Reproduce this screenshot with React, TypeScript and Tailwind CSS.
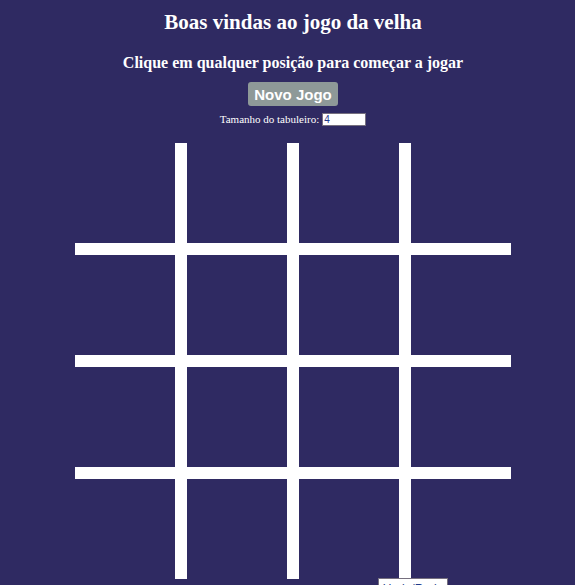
import React, { useState } from "react"

const serif = "font-['Liberation_Serif','Times_New_Roman',serif]"

function Board({ size }: { size: number }) {
  const cells = Array.from({ length: size * size }, (_, i) => i)
  return (
    <div className="grid w-[436px] grid-cols-4 gap-[12px] bg-white">
      {cells.map((i) => (
        <div key={i} className="h-[100px] w-[100px] bg-[#2f2a62]" />
      ))}
    </div>
  )
}

export default function App() {
  const [size, setSize] = useState("4")
  return (
    <div className={`min-h-screen w-full bg-[#2f2a62] pl-[11px] text-white ${serif}`}>
      <div className="flex flex-col items-center">
        <h1 className="mt-[8px] text-[21px] font-bold leading-[28px]">
          Boas vindas ao jogo da velha
        </h1>
        <h2 className="mt-[17px] text-[16px] font-bold leading-[20px]">
          Clique em qualquer posição para começar a jogar
        </h2>
        <button className="mt-[9px] h-[24px] w-[90px] rounded-[3px] bg-[#8e9998] font-['Liberation_Sans',Arial,sans-serif] text-[15px] font-bold leading-none text-white">
          Novo Jogo
        </button>
        <label className="mt-[7px] flex items-center gap-[3px] text-[11px] leading-[13px]">
          Tamanho do tabuleiro:
          <input
            value={size}
            onChange={(e) => setSize(e.target.value)}
            className="h-[13px] w-[44px] border border-[#76707f] bg-white px-[1px] font-['Liberation_Sans',Arial,sans-serif] text-[10px] leading-none text-[#1f3a8a] outline-none"
          />
        </label>
        <div className="mt-[17px]">
          <Board size={4} />
        </div>
        <div className="flex w-[436px] justify-start">
          <button className="-mt-px ml-[303px] h-[22px] w-[70px] border border-[#76707f] bg-white font-['Liberation_Sans',Arial,sans-serif] text-[12px] text-[#1f3a8a]">
            Undo/Redo
          </button>
        </div>
      </div>
    </div>
  )
}
